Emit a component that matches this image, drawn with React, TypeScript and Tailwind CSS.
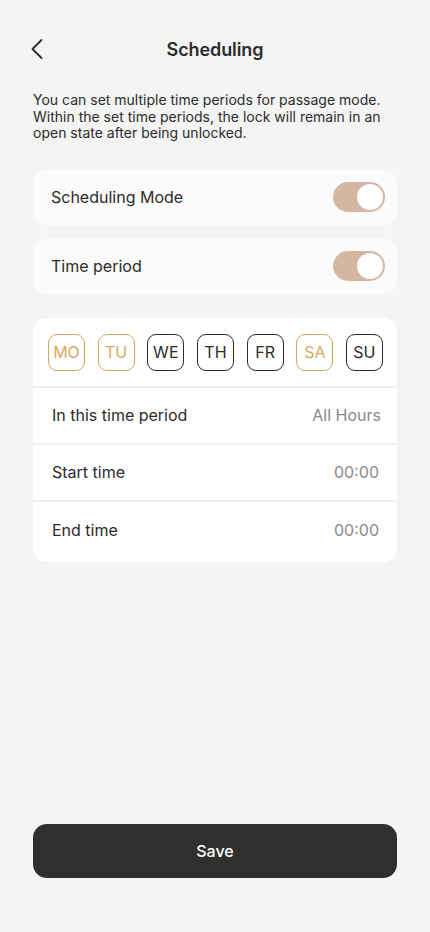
import React, { useState } from 'react';

const DAYS = [
  { id: 'MO', on: true },
  { id: 'TU', on: true },
  { id: 'WE', on: false },
  { id: 'TH', on: false },
  { id: 'FR', on: false },
  { id: 'SA', on: true },
  { id: 'SU', on: false },
];

function Toggle({ on }: { on: boolean }) {
  return (
    <div className={`w-[52px] h-[30px] rounded-full p-[2px] flex items-center ${on ? 'bg-[#d3b7a2] justify-end' : 'bg-[#dddddd] justify-start'}`}>
      <div className="w-[26px] h-[26px] rounded-full bg-white" />
    </div>
  );
}

export default function App() {
  const [days] = useState(DAYS);

  return (
    <div className="min-h-[932px] w-[430px] bg-[#f4f4f4] flex flex-col px-[33px] text-[#2c2c2c]" style={{ fontFamily: 'Inter, "Noto Sans", sans-serif' }}>
      {/* Header */}
      <div className="relative h-[46px] mt-[26px] flex items-center justify-center">
        <svg className="absolute left-[-3px] top-[12px]" width="14" height="22" viewBox="0 0 14 22" fill="none">
          <path d="M11.5 2 L2.5 11 L11.5 20" stroke="#2c2c2c" strokeWidth="1.8" strokeLinecap="round" strokeLinejoin="round" />
        </svg>
        <span className="text-[18px] font-semibold tracking-[-0.1px]">Scheduling</span>
      </div>

      <p className="mt-[20px] text-[14px] leading-[16.5px] text-[#2c2c2c]">
        You can set multiple time periods for passage mode. Within the set time periods, the lock will remain in an open state after being unlocked.
      </p>

      <div className="mt-[28px] h-[55px] rounded-[14px] bg-[#fbfbfb] flex items-center justify-between pl-[18px] pr-[12px]">
        <span className="text-[16px]">Scheduling Mode</span>
        <Toggle on />
      </div>

      <div className="mt-[14px] h-[55px] rounded-[14px] bg-[#fbfbfb] flex items-center justify-between pl-[18px] pr-[12px]">
        <span className="text-[16px]">Time period</span>
        <Toggle on />
      </div>

      <div className="mt-[24px] rounded-[14px] bg-white flex flex-col">
        <div className="h-[68px] flex items-center justify-between pl-[15px] pr-[14px] pt-[1px]">
          {days.map((d) => (
            <div
              key={d.id}
              className={`w-[37px] h-[37px] rounded-[9px] border flex items-center justify-center text-[16px] ${d.on ? 'border-[#d8a75e] text-[#d8a75e]' : 'border-[#2c2c2c] text-[#2c2c2c]'}`}
            >
              {d.id}
            </div>
          ))}
        </div>
        <div className="h-[2px] bg-[#efefef]" />
        <div className="h-[55px] flex items-center justify-between pl-[19px] pr-[16px]">
          <span className="text-[16px]">In this time period</span>
          <span className="text-[16px] text-[#8a8a8a]">All Hours</span>
        </div>
        <div className="h-[2px] bg-[#efefef]" />
        <div className="h-[55px] flex items-center justify-between pl-[19px] pr-[18px]">
          <span className="text-[16px]">Start time</span>
          <span className="text-[16px] text-[#8a8a8a]">00:00</span>
        </div>
        <div className="h-[2px] bg-[#efefef]" />
        <div className="h-[60px] flex items-center justify-between pl-[19px] pr-[18px] pb-[4px]">
          <span className="text-[16px]">End time</span>
          <span className="text-[16px] text-[#8a8a8a]">00:00</span>
        </div>
      </div>

      <div className="flex-1" />

      <button className="mb-[54px] h-[54px] w-full rounded-[14px] bg-[#302f2d] text-white text-[16px] font-medium">
        Save
      </button>
    </div>
  );
}
